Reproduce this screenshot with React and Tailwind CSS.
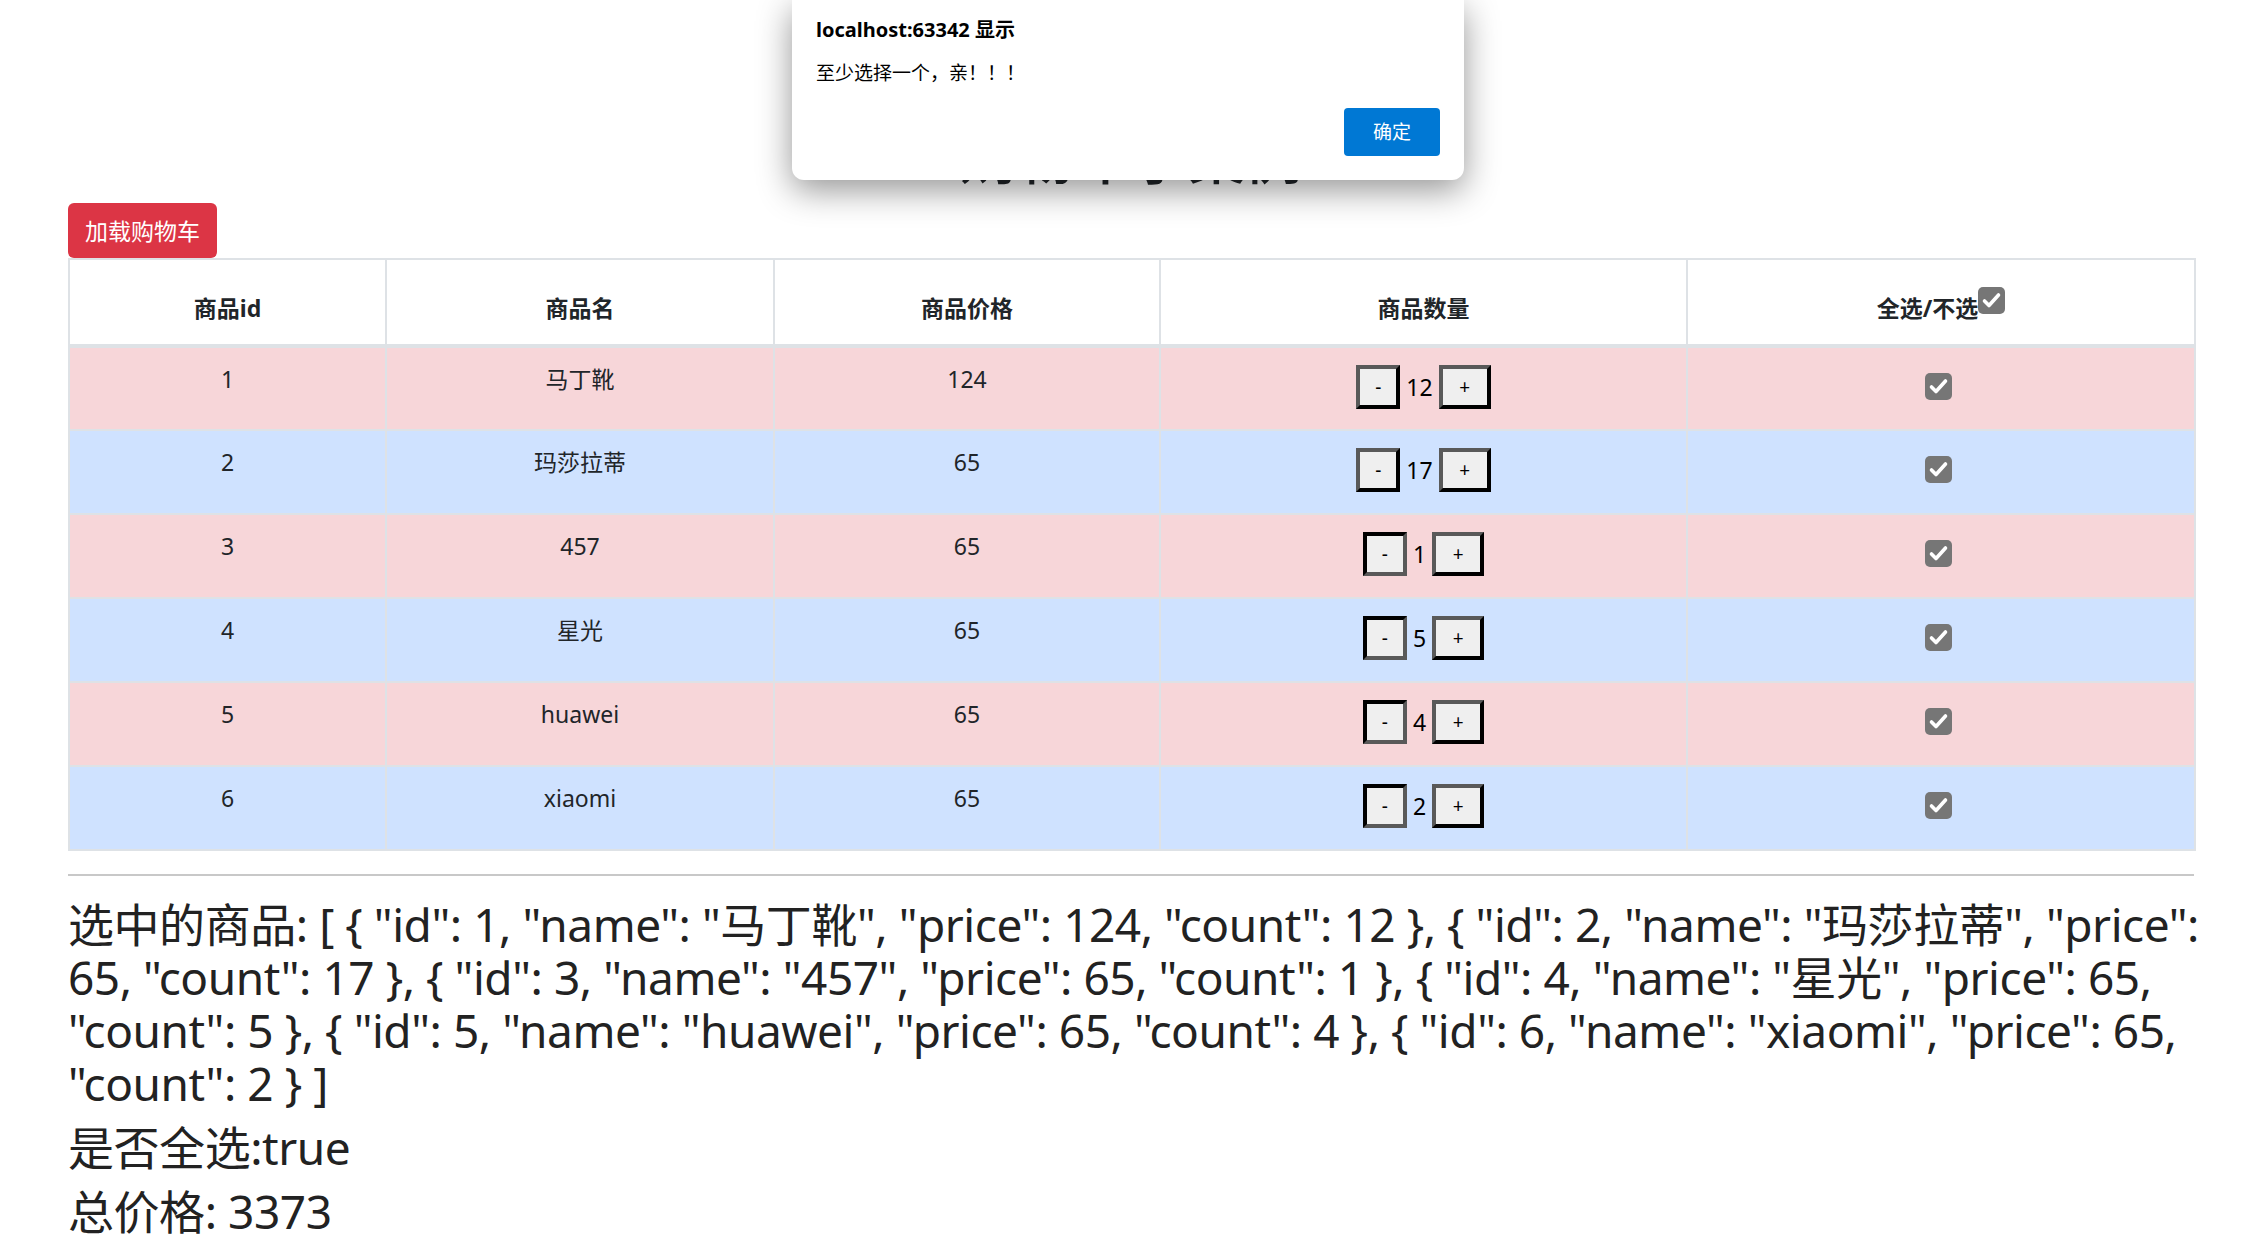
import clsx from 'clsx';

const items = [
  { id: 1, name: '马丁靴', price: 124, count: 12 },
  { id: 2, name: '玛莎拉蒂', price: 65, count: 17 },
  { id: 3, name: '457', price: 65, count: 1 },
  { id: 4, name: '星光', price: 65, count: 5 },
  { id: 5, name: 'huawei', price: 65, count: 4 },
  { id: 6, name: 'xiaomi', price: 65, count: 2 },
];

const fontStack = "font-['Noto_Sans','Noto_Sans_CJK_SC',sans-serif]";

function CheckBox({ className }) {
  return (
    <span className={clsx('block h-[27px] w-[27px] rounded-[5px] bg-[#767676]', className)}>
      <svg viewBox="0 0 27 27" className="h-[27px] w-[27px]">
        <path
          d="M6.5 14 L11 18.5 L20.5 8"
          fill="none"
          stroke="white"
          strokeWidth="3.6"
          strokeLinecap="round"
          strokeLinejoin="round"
        />
      </svg>
    </span>
  );
}

function QtyButton({ children, wide, pressed }) {
  return (
    <button
      type="button"
      className={clsx(
        'flex h-[44px] items-center justify-center border-4 bg-[#efefef] text-[19px] leading-none text-black',
        wide ? 'w-[52px]' : 'w-[44px]',
        pressed
          ? 'border-t-black border-l-black border-r-[#595959] border-b-[#595959]'
          : 'border-t-[#595959] border-l-[#595959] border-r-black border-b-black'
      )}
    >
      {children}
    </button>
  );
}

const lines = [
  '选中的商品: [ { "id": 1, "name": "马丁靴", "price": 124, "count": 12 }, { "id": 2, "name": "玛莎拉蒂", "price":',
  '65, "count": 17 }, { "id": 3, "name": "457", "price": 65, "count": 1 }, { "id": 4, "name": "星光", "price": 65,',
  '"count": 5 }, { "id": 5, "name": "huawei", "price": 65, "count": 4 }, { "id": 6, "name": "xiaomi", "price": 65,',
  '"count": 2 } ]',
];

export default function App() {
  const total = items.reduce((sum, it) => sum + it.price * it.count, 0);

  return (
    <div className={clsx('relative min-h-screen bg-white pl-[68px] pr-[50px] pt-[123px] text-[#212529]', fontStack)}>
      <h1 className="mb-[11px] text-center text-[57px] font-medium leading-[69px]">购物车小案例</h1>

      <button
        type="button"
        className="block h-[55px] rounded-[6px] bg-[#dc3545] px-[17px] text-[23px] leading-[34px] text-white"
      >
        加载购物车
      </button>

      <table className="w-[2126px] table-fixed border-collapse text-[23px] leading-[34px]">
        <colgroup>
          <col className="w-[317px]" />
          <col className="w-[388px]" />
          <col className="w-[386px]" />
          <col className="w-[527px]" />
          <col className="w-[508px]" />
        </colgroup>
        <thead>
          <tr className="bg-white">
            <th className="h-[87px] border-2 border-b-[4px] border-[#dee2e6] pb-[19px] align-bottom font-bold">商品id</th>
            <th className="h-[87px] border-2 border-b-[4px] border-[#dee2e6] pb-[19px] align-bottom font-bold">商品名</th>
            <th className="h-[87px] border-2 border-b-[4px] border-[#dee2e6] pb-[19px] align-bottom font-bold">商品价格</th>
            <th className="h-[87px] border-2 border-b-[4px] border-[#dee2e6] pb-[19px] align-bottom font-bold">商品数量</th>
            <th className="h-[87px] border-2 border-b-[4px] border-[#dee2e6] pb-[19px] align-bottom font-bold">
              <span className="inline-flex items-end">
                全选/不选
                <CheckBox className="mb-[11px]" />
              </span>
            </th>
          </tr>
        </thead>
        <tbody>
          {items.map((it, i) => (
            <tr key={it.id} className={i % 2 === 0 ? 'bg-[#f7d6d9]' : 'bg-[#cfe2ff]'}>
              <td className="h-[84px] border-2 border-[#dee2e6] pt-[14px] text-center align-top">{it.id}</td>
              <td className="h-[84px] border-2 border-[#dee2e6] pt-[14px] text-center align-top">{it.name}</td>
              <td className="h-[84px] border-2 border-[#dee2e6] pt-[14px] text-center align-top">{it.price}</td>
              <td className="h-[84px] border-2 border-[#dee2e6] pt-[17px] align-top">
                <div className="flex items-center justify-center gap-[6px]">
                  <QtyButton pressed={i >= 2}>-</QtyButton>
                  <span className="text-black">{it.count}</span>
                  <QtyButton wide>+</QtyButton>
                </div>
              </td>
              <td className="h-[84px] border-2 border-[#dee2e6] pt-[25px] align-top">
                <CheckBox className="ml-[237px]" />
              </td>
            </tr>
          ))}
        </tbody>
      </table>

      <hr className="mt-[23px] w-[2126px] border-0 border-t-2 border-[#c8c8c8]" />

      <div className="mt-[22px] w-[2126px] text-[46px] leading-[53px] tracking-[-0.45px] text-[#222]">
        <p>
          {lines.map((l) => (
            <span key={l} className="block whitespace-nowrap">{l}</span>
          ))}
        </p>
        <p className="mt-[11px]">是否全选:true</p>
        <p className="mt-[11px]">总价格: {total}</p>
      </div>

      <div className="absolute left-[792px] top-0 h-[180px] w-[672px] rounded-b-[12px] bg-white px-[24px] pt-[16px] shadow-[0_10px_34px_rgba(0,0,0,0.42)]">
        <div className="text-[20px] font-bold leading-[28px] text-black">localhost:63342 显示</div>
        <div className="mt-[16px] text-[19px] leading-[27px] text-black">至少选择一个，亲！！！</div>
        <div className="mt-[21px] flex justify-end">
          <button
            type="button"
            className="h-[48px] w-[96px] rounded-[4px] bg-[#0078d4] text-[19px] leading-none text-white"
          >
            确定
          </button>
        </div>
      </div>
    </div>
  );
}
